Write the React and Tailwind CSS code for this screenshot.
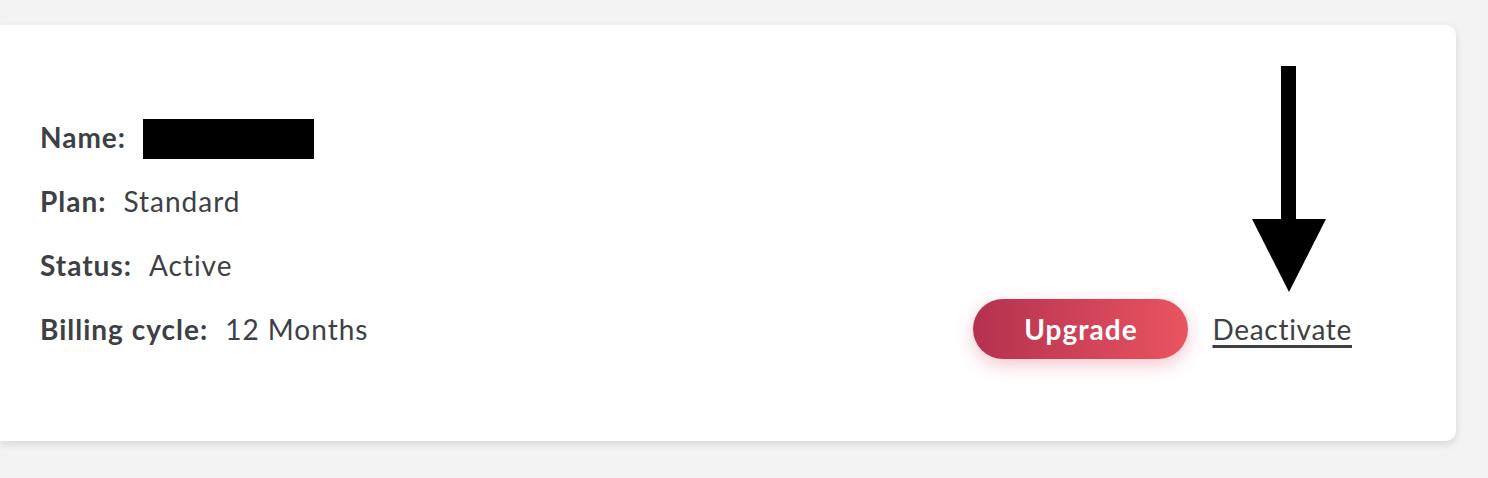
import React from 'react';

const rows = [
  { label: 'Plan:', value: 'Standard' },
  { label: 'Status:', value: 'Active' },
  { label: 'Billing cycle:', value: '12 Months' },
];

// annotation arrow pointing at the Deactivate link
const DownArrow = () => (
  <svg width="76" height="228" viewBox="0 0 76 228" className="block">
    <rect x="29" y="0" width="15" height="155" fill="#000" />
    <polygon points="0,153 74,153 37,226" fill="#000" />
  </svg>
);

export default function App() {
  return (
    <div className="min-h-[478px] bg-[#f3f3f3] pt-[25px] pr-[32px] font-['Lato','Liberation_Sans',sans-serif] text-[#3d4045] tracking-[1px]">
      <div className="relative h-[416px] rounded-r-[10px] bg-white pl-[40px] pr-[104px] shadow-[0_3px_8px_rgba(0,0,0,0.12)] flex items-stretch justify-between">
        {/* --- ACCOUNT DETAILS --- */}
        <div className="flex flex-col gap-[24px] pt-[92px] text-[28px]">
          <div className="flex h-[40px] items-center">
            <span className="font-bold">Name:</span>
            <span className="ml-[17px] mt-[4px] inline-block h-[40px] w-[171px] bg-black" />
          </div>
          {rows.map((r) => (
            <div key={r.label} className="flex h-[40px] items-center">
              <span className="font-bold">{r.label}</span>
              <span className="ml-[17px]">{r.value}</span>
            </div>
          ))}
        </div>

        {/* --- ACTIONS --- */}
        <div className="flex items-end pb-[82px]">
          <div className="flex items-center gap-[24px]">
            <button className="h-[60px] w-[215px] rounded-full bg-gradient-to-r from-[#b4314f] to-[#ea5460] text-[28px] font-bold text-white shadow-[0_6px_18px_rgba(220,70,90,0.3)]">
              Upgrade
            </button>
            <a href="#" className="text-[28px] leading-[30px] tracking-[0.7px] underline decoration-[3px] underline-offset-[5px]">
              Deactivate
            </a>
          </div>
        </div>

        <div className="absolute left-[1252px] top-[41px]">
          <DownArrow />
        </div>
      </div>
    </div>
  );
}
